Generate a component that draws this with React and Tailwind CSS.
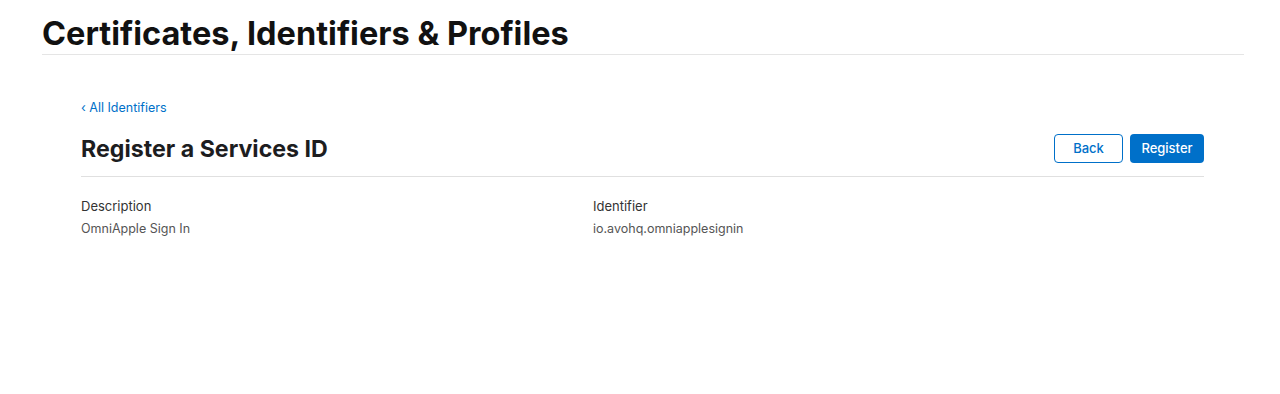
export default function App() {
  return (
    <div className="w-[1280px] h-[394px] bg-white">
      <div className="px-[42px] pt-[14px] font-['Inter',sans-serif]">
        <h1 className="text-[32.5px] leading-[40px] font-bold text-[#111] tracking-[0px] border-b border-[#e5e5e5] w-[1202px]">
          Certificates, Identifiers &amp; Profiles
        </h1>
      </div>
      <div className="ml-[81px] w-[1123px] pt-[45px] font-['Inter',sans-serif]">
        <a className="block text-[12.5px] leading-[16px] text-[#0070c9]">‹ All Identifiers</a>
        <div className="flex items-center justify-between mt-[18px] pb-[13px] border-b border-[#e0e0e0]">
          <h2 className="text-[23.2px] leading-[28px] font-bold text-[#1d1d1f] tracking-[0px]">Register a Services ID</h2>
          <div className="flex gap-[7px]">
            <button className="w-[69px] h-[29px] rounded-[4px] border border-[#0070c9] text-[#0070c9] text-[13px] font-medium">Back</button>
            <button className="w-[74px] h-[29px] rounded-[4px] bg-[#0070c9] text-white text-[13px] font-medium">Register</button>
          </div>
        </div>
        <div className="flex pt-[20px]">
          <div className="w-[512px]">
            <div className="text-[13px] leading-[18px] text-[#333]">Description</div>
            <div className="text-[12.5px] leading-[18px] text-[#555] mt-[5px]">OmniApple Sign In</div>
          </div>
          <div>
            <div className="text-[13px] leading-[18px] text-[#333]">Identifier</div>
            <div className="text-[12.5px] leading-[18px] text-[#555] mt-[5px]">io.avohq.omniapplesignin</div>
          </div>
        </div>
      </div>
    </div>
  );
}
